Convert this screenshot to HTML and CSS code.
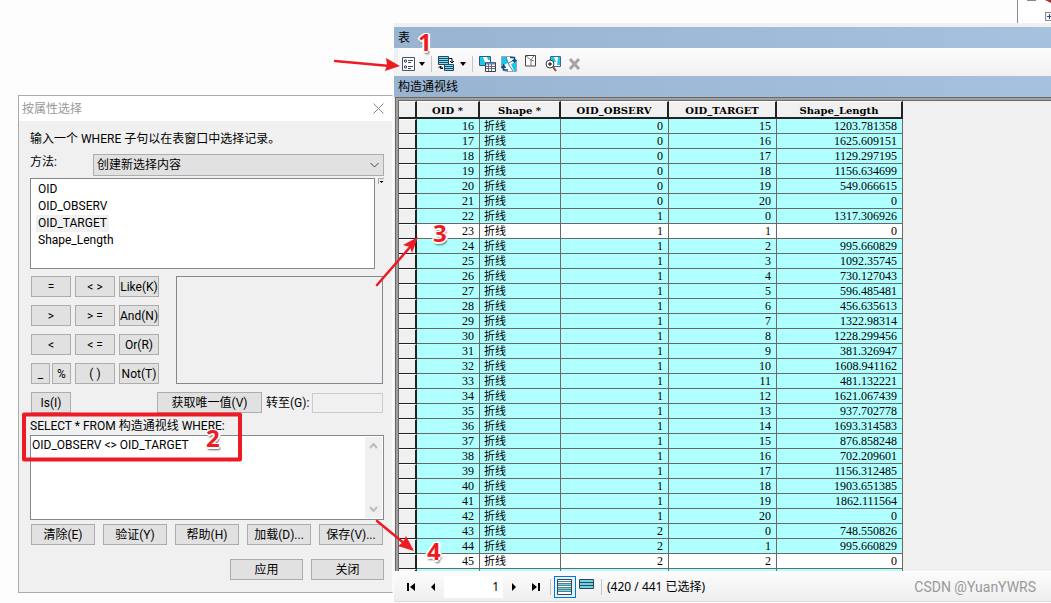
FILE: index.html
```
<!DOCTYPE html>
<html lang="zh-CN">
<head>
<meta charset="utf-8">
<title>按属性选择</title>
<link rel="stylesheet" href="styles.css">
</head>
<body>
<main class="desktop">
  <div class="tree-pane">
    <svg width="33" height="23" viewBox="0 0 33 23"><path d="M9 0h9" stroke="#888" stroke-width="2"/><path d="M27 0l6 3V0z" fill="#b03030"/><rect x="27.500" y="12.500" width="8" height="8" fill="#f4f4f4" stroke="#888"/><path d="M29 16.500h5M31.500 14v5" stroke="#2a4a9a"/></svg>
  </div>

  <section class="table-window">
    <header class="bar">表</header>
    <div class="toolbar">
      <button class="tool" aria-label="表选项"><svg width="14" height="14" viewBox="0 0 14 14"><path d="M.5.5h12v13H.5z" fill="#fff" stroke="#456"/><circle cx="3.500" cy="4" r="1.200" fill="none" stroke="#234"/><circle cx="3.500" cy="10" r="1.200" fill="none" stroke="#234"/><path d="M6 3.500h5M6 5.500h3M6 9.500h5M6 11.500h3" stroke="#447"/></svg></button>
      <button class="tool arrow" aria-label="表选项菜单"><svg width="6" height="4" viewBox="0 0 6 4"><path d="M0 0h6L3 4z"/></svg></button>
      <i class="divider"></i>
      <button class="tool" aria-label="关联表"><svg width="17" height="16" viewBox="0 0 17 16"><path d="M.5.500h10v8H.5zM6.500 8.500h9v6h-9z" fill="#7ce0ee" stroke="#246"/><path d="M1 2.500h9M1 4.500h9M1 6.500h9M7 10.500h8M7 12.500h8" stroke="#246"/><path d="M11 2.500h3V6M12 5l2 2 2-2M5 12.500H2.500V10M.5 12l2-2 2 2" fill="none" stroke="#000"/></svg></button>
      <button class="tool arrow" aria-label="关联表菜单"><svg width="6" height="4" viewBox="0 0 6 4"><path d="M0 0h6L3 4z"/></svg></button>
      <i class="divider"></i>
      <button class="tool" aria-label="按属性选择"><svg width="17" height="16" viewBox="0 0 17 16"><path d="M.5.5h11v9H.5z" fill="#fff" stroke="#357"/><path d="M1 1h3l3 8H1zM8 1h3v3H9z" fill="#18c8ea"/><path d="M6.500 6.500h10v9h-10z" fill="#fff" stroke="#345"/><path d="M7 7.500h9" stroke="#68b" stroke-width="2"/><path d="M7 10.500h9M7 12.500h9M9.500 8v7M12.500 8v7" stroke="#667"/></svg></button>
      <button class="tool" aria-label="切换选择"><svg width="16" height="16" viewBox="0 0 16 16"><path d="M.5.5h11l4 4v11h-11l-4-4z" fill="#fff" stroke="#8ab"/><path d="M1 1h4l2 6-4 2H1zM10 8l5-2v9h-2z" fill="#18c8ea"/><path d="M5 1l3 8 4 6M8 7l6-4" fill="none" stroke="#579"/><path d="M9 1.500h4.500V5M11.500 4l2 2 2-2M7 14H2.500v-4M.5 12l2-3 2 3" fill="none" stroke="#124a88" stroke-width="1.500"/></svg></button>
      <button class="tool" aria-label="清除所选内容"><svg class="raised" width="12" height="12" viewBox="0 0 12 12"><path d="M.5.500h10v10.500H.5z" fill="#fff" stroke="#444"/><path d="M1 1l5 4 3-4M6 5v6M6 5l3 1" fill="none" stroke="#777"/></svg></button>
      <button class="tool" aria-label="缩放至所选项"><svg width="16" height="16" viewBox="0 0 16 16"><path d="M5.500.5h10v10h-10z" fill="#fff" stroke="#468"/><path d="M6 1h3l2 5H6zM13 1h2v8h-3z" fill="#18c8ea"/><circle cx="5" cy="8" r="4" fill="#fff" stroke="#334"/><path d="M3 8h4M5 6v4" stroke="#000"/><path d="M8 11l3 4" stroke="#944a38" stroke-width="2"/></svg></button>
      <button class="tool" aria-label="删除所选项"><svg width="14" height="12" viewBox="0 0 14 12"><path d="M2 1l9 10M11 1L2 11" stroke="#a4a4a4" stroke-width="3"/></svg></button>
    </div>
    <div class="bar">构造通视线</div>
    <div class="grid-frame">
      <div class="grid-view">
        <table class="grid">
          <colgroup><col class="c-mark"><col class="c-oid"><col class="c-shape"><col class="c-id"><col class="c-id"><col class="c-length"></colgroup>
          <thead><tr><th></th><th>OID *</th><th>Shape *</th><th>OID_OBSERV</th><th>OID_TARGET</th><th>Shape_Length</th></tr></thead>
          <tbody>
            <tr><th></th><td>16</td><td>折线</td><td>0</td><td>15</td><td>1203.781358</td></tr>
            <tr><th></th><td>17</td><td>折线</td><td>0</td><td>16</td><td>1625.609151</td></tr>
            <tr><th></th><td>18</td><td>折线</td><td>0</td><td>17</td><td>1129.297195</td></tr>
            <tr><th></th><td>19</td><td>折线</td><td>0</td><td>18</td><td>1156.634699</td></tr>
            <tr><th></th><td>20</td><td>折线</td><td>0</td><td>19</td><td>549.066615</td></tr>
            <tr><th></th><td>21</td><td>折线</td><td>0</td><td>20</td><td>0</td></tr>
            <tr><th></th><td>22</td><td>折线</td><td>1</td><td>0</td><td>1317.306926</td></tr>
            <tr class="plain"><th></th><td>23</td><td>折线</td><td>1</td><td>1</td><td>0</td></tr>
            <tr><th></th><td>24</td><td>折线</td><td>1</td><td>2</td><td>995.660829</td></tr>
            <tr><th></th><td>25</td><td>折线</td><td>1</td><td>3</td><td>1092.35745</td></tr>
            <tr><th></th><td>26</td><td>折线</td><td>1</td><td>4</td><td>730.127043</td></tr>
            <tr><th></th><td>27</td><td>折线</td><td>1</td><td>5</td><td>596.485481</td></tr>
            <tr><th></th><td>28</td><td>折线</td><td>1</td><td>6</td><td>456.635613</td></tr>
            <tr><th></th><td>29</td><td>折线</td><td>1</td><td>7</td><td>1322.98314</td></tr>
            <tr><th></th><td>30</td><td>折线</td><td>1</td><td>8</td><td>1228.299456</td></tr>
            <tr><th></th><td>31</td><td>折线</td><td>1</td><td>9</td><td>381.326947</td></tr>
            <tr><th></th><td>32</td><td>折线</td><td>1</td><td>10</td><td>1608.941162</td></tr>
            <tr><th></th><td>33</td><td>折线</td><td>1</td><td>11</td><td>481.132221</td></tr>
            <tr><th></th><td>34</td><td>折线</td><td>1</td><td>12</td><td>1621.067439</td></tr>
            <tr><th></th><td>35</td><td>折线</td><td>1</td><td>13</td><td>937.702778</td></tr>
            <tr><th></th><td>36</td><td>折线</td><td>1</td><td>14</td><td>1693.314583</td></tr>
            <tr><th></th><td>37</td><td>折线</td><td>1</td><td>15</td><td>876.858248</td></tr>
            <tr><th></th><td>38</td><td>折线</td><td>1</td><td>16</td><td>702.209601</td></tr>
            <tr><th></th><td>39</td><td>折线</td><td>1</td><td>17</td><td>1156.312485</td></tr>
            <tr><th></th><td>40</td><td>折线</td><td>1</td><td>18</td><td>1903.651385</td></tr>
            <tr><th></th><td>41</td><td>折线</td><td>1</td><td>19</td><td>1862.111564</td></tr>
            <tr><th></th><td>42</td><td>折线</td><td>1</td><td>20</td><td>0</td></tr>
            <tr><th></th><td>43</td><td>折线</td><td>2</td><td>0</td><td>748.550826</td></tr>
            <tr><th></th><td>44</td><td>折线</td><td>2</td><td>1</td><td>995.660829</td></tr>
            <tr class="plain"><th></th><td>45</td><td>折线</td><td>2</td><td>2</td><td>0</td></tr>
            <tr><th></th><td></td><td></td><td></td><td></td><td></td></tr>
          </tbody>
        </table>
      </div>
    </div>
    <footer class="navbar">
      <button class="tool nav" aria-label="第一条"><svg width="8" height="8" viewBox="0 0 8 8"><path d="M0 0h2v8H0zM8 0v8L3 4z"/></svg></button>
      <button class="tool nav" aria-label="上一条"><svg width="8" height="8" viewBox="0 0 8 8"><path d="M6 0v8L2 4z"/></svg></button>
      <input class="record" value="1" aria-label="当前记录">
      <button class="tool nav" aria-label="下一条"><svg width="8" height="8" viewBox="0 0 8 8"><path d="M2 0v8l4-4z"/></svg></button>
      <button class="tool nav" aria-label="最后一条"><svg width="8" height="8" viewBox="0 0 8 8"><path d="M6 0h2v8H6zM0 0v8l5-4z"/></svg></button>
      <i class="divider"></i>
      <button class="tool view active" aria-label="显示所有记录"><svg width="16" height="16" viewBox="0 0 16 16"><path d="M.5.5h14v15H.5z" fill="#fff" stroke="#345"/><path d="M1 5h13v2H1zM1 9h13v3H1z" fill="#6cd4e6"/><path d="M1 2.500h13M1 4.500h13M1 6.500h13M1 8.500h13M1 10.500h13M1 12.500h13" stroke="#57808c"/></svg></button>
      <button class="tool view" aria-label="显示所选记录"><svg class="raised" width="16" height="10" viewBox="0 0 16 10"><path d="M.5.5h14v9H.5z" fill="#6cd4e6" stroke="#345"/><path d="M1 3.500h13M1 6.500h13" stroke="#345"/></svg></button>
      <i class="divider"></i>
      <span class="count">(420 / 441 已选择)</span>
      <span class="credit">CSDN @YuanYWRS</span>
    </footer>
  </section>

  <section class="dialog">
    <header class="dialog-title">按属性选择
      <button class="close" aria-label="关闭窗口"><svg width="11" height="11" viewBox="0 0 11 11"><path d="M.5.5l10 10M10.500.5l-10 10" stroke="#888"/></svg></button>
    </header>
    <form class="dialog-body">
      <p class="hint">输入一个 WHERE 子句以在表窗口中选择记录。</p>
      <div class="method">
        <label for="method">方法:</label>
        <span class="select-wrap"><select id="method"><option>创建新选择内容</option></select><svg width="9" height="6" viewBox="0 0 9 6"><path d="M.5 1l4 4 4-4" fill="none" stroke="#444"/></svg></span>
      </div>
      <div class="fields">
        <ul class="field-list"><li>OID</li><li>OID_OBSERV</li><li class="current">OID_TARGET</li><li>Shape_Length</li></ul>
        <button type="button" class="field-menu" aria-label="字段选项"><svg width="6" height="6" viewBox="0 0 6 6"><path d="M0 .5h6M.5 0v6" stroke="#aaa"/><path d="M1.500 3h4L3.500 5z"/></svg></button>
      </div>
      <div class="builder">
        <div class="keys">
          <button type="button">=</button><button type="button">&lt; &gt;</button><button type="button">Like(K)</button>
          <button type="button">&gt;</button><button type="button">&gt; =</button><button type="button">And(N)</button>
          <button type="button">&lt;</button><button type="button">&lt; =</button><button type="button">Or(R)</button>
          <div class="pair"><button type="button">_</button><button type="button">%</button></div><button type="button">( )</button><button type="button">Not(T)</button>
        </div>
        <div class="values"></div>
      </div>
      <div class="unique">
        <button type="button" class="is">Is(I)</button>
        <button type="button" class="get">获取唯一值(V)</button>
        <label for="goto">转至(G):</label>
        <input id="goto" disabled>
      </div>
      <label class="sql-label" for="sql">SELECT * FROM 构造通视线 WHERE:</label>
      <div class="sql">
        <textarea id="sql" spellcheck="false">OID_OBSERV &lt;&gt; OID_TARGET</textarea>
        <div class="scroll"><svg width="9" height="6" viewBox="0 0 9 6"><path d="M1 5l3.500-4L8 5" fill="none" stroke="#bcbcbc" stroke-width="2"/></svg><svg width="9" height="6" viewBox="0 0 9 6"><path d="M1 1l3.500 4L8 1" fill="none" stroke="#bcbcbc" stroke-width="2"/></svg></div>
      </div>
      <div class="actions">
        <button type="button">清除(E)</button><button type="button">验证(Y)</button><button type="button">帮助(H)</button><button type="button">加载(D)...</button><button type="button">保存(V)...</button>
      </div>
      <div class="confirm"><button type="button">应用</button><button type="button">关闭</button></div>
    </form>
  </section>

  <svg class="marks" width="500" height="603" viewBox="0 0 500 603">
    <g fill="none" stroke="#ed1c24" stroke-linecap="round">
      <rect x="24" y="414.500" width="216" height="45" stroke-width="4" stroke-linejoin="round"/>
      <path d="M335 61l55 5M377 285l34-39M377 521l28 23" stroke-width="2.500"/>
    </g>
    <path d="M400 66l-15 5 2-6-1-7zM418 237l-6 16-2-6-7-2zM414 551l-16-5 5-4 3-6z" fill="#ed1c24"/>
  </svg>
  <b class="mark one">1</b><b class="mark two">2</b><b class="mark three">3</b><b class="mark four">4</b>
</main>
</body>
</html>
```
FILE: styles.css
```
* { box-sizing: border-box; }
body {
  margin: 0;
  background: #fdfdfd;
  color: #000;
  font: 12px/16px Roboto, "Noto Sans CJK SC", sans-serif;
}
button, input, select, textarea { font: inherit; color: inherit; margin: 0; border-radius: 0; }
svg { display: block; }
.desktop { position: relative; min-height: 100vh; overflow: hidden; }
.tree-pane {
  position: absolute; top: 0; right: 0;
  overflow: hidden;
  background: #fff;
  border-left: 1px solid #8a8a96;
}

/* attribute table window */
.table-window {
  position: absolute; top: 23px; left: 394px; right: 0; bottom: 1px;
  display: flex; flex-direction: column;
  padding-top: 4px;
  background: #f0f0f0;
  border-bottom: 1px solid #dcdcdc;
}
.bar {
  height: 21px;
  padding: 0 4px;
  line-height: 23px;
  background: linear-gradient(90deg, #99b4d1, #a6c1de);
}
.toolbar {
  display: flex; align-items: center;
  height: 28px;
  margin: 0 0 0 4px;
  padding: 3px 4px 0;
  background: linear-gradient(#fdfdfd, #f0f0f0);
}
.tool {
  display: flex; align-items: center; justify-content: center;
  width: 22px; height: 22px;
  padding: 0; border: 0;
  background: none;
}
.toolbar .tool:first-child { width: 14px; }
.toolbar .arrow { width: 12px; }
.raised { margin-bottom: 5px; }
.divider { width: 1px; height: 16px; margin: 0 3px; background: #c4c4c4; }
.grid-frame {
  flex: 1; min-height: 0;
  display: flex;
  margin-left: 1px;
  border: 4px double #696969;
  border-right: 0; border-bottom: 0;
  background: #a0a0a0;
}
.grid-view { flex: 1; overflow: hidden; background: #f0f0f0; }
.grid { width: 504px; table-layout: fixed; border-collapse: separate; border-spacing: 0; }
.c-mark { width: 18px; }
.c-oid { width: 63px; }
.c-shape { width: 81px; }
.c-id { width: 108px; }
.c-length { width: 126px; }
.grid th {
  height: 15px;
  padding: 0;
  background: #f0f0f0;
  border-top: 1px solid #fff;
  border-right: 2px solid #222;
  border-bottom: 1px solid #222;
  font: bold 10px/13px "DejaVu Serif", serif;
}
.grid thead th { height: 18px; padding-top: 2px; border-bottom-width: 2px; }
.grid td {
  height: 15px;
  padding: 0 5px 0 4px;
  background: #afffff;
  border-right: 1px solid #696969;
  border-bottom: 1px solid #696969;
  font: 12px/14px "Liberation Serif", "Noto Sans CJK SC", serif;
  text-align: right;
}
.grid td:nth-child(3) { font-size: 11px; text-align: left; }
.grid .plain td { background: #fff; }
.navbar {
  display: flex; align-items: center;
  height: 30px;
  padding: 0 15px 0 6px;
  border-top: 1px solid #fff;
  background: linear-gradient(#fcfcfc, #eee);
  font-family: "Noto Sans", "Noto Sans CJK SC", sans-serif;
}
.record { width: 59px; height: 22px; padding: 0 4px; border: 0; background: #fff; text-align: right; }
.view { border: 1px solid transparent; }
.view.active { border-color: #0078d7; background: #e4f0fa; }
.count { margin-left: 2px; }
.credit { margin-left: auto; color: #999; font: 14px/16px Roboto, sans-serif; }

/* query dialog */
.dialog {
  position: absolute; top: 95px; left: 18px;
  width: 375px;
  background: #f0f0f0;
  border: 1px solid #aaa;
  border-right-color: #f8f8f8;
}
.dialog-title {
  display: flex; align-items: center; justify-content: space-between;
  height: 25px;
  padding: 0 8px 0 3px;
  background: #fff;
  color: #999;
}
.close { padding: 0; border: 0; background: none; }
.dialog-body { padding: 10px 8px 12px 11px; }
.dialog-body button {
  height: 21px;
  padding: 0;
  border: 1px solid #adadad;
  background: #e1e1e1;
  line-height: 18px;
  white-space: nowrap;
}
.hint { margin: 0 0 7px; }
.method { display: flex; justify-content: space-between; }
.select-wrap { position: relative; width: 291px; height: 22px; }
.select-wrap select {
  width: 100%; height: 22px;
  padding: 0 3px;
  appearance: none;
  border: 1px solid #adadad;
  background: #e1e1e1;
}
.select-wrap svg { position: absolute; top: 8px; right: 5px; }
.fields { display: flex; gap: 3px; margin-top: 2px; }
.field-list {
  width: 345px; height: 91px;
  margin: 0; padding: 2px 5px;
  border: 1px solid #828790;
  background: #fff;
  list-style: none;
}
.field-list li { width: max-content; padding: 0 2px; line-height: 17px; }
.field-list .current { background: #f0f0f0; }
.dialog-body .field-menu { height: 6px; border: 0; background: none; }
.builder { display: flex; gap: 17px; margin: 7px 1px 0; }
.keys { display: grid; grid-template-columns: repeat(3, 40px); gap: 8px 4px; }
.pair { display: flex; gap: 2px; }
.pair button { flex: 1; }
.values { flex: 1; border: 1px solid #828790; }
.unique { display: flex; align-items: center; margin: 8px 1px 0; }
.is { width: 40px; }
.get { width: 105px; margin: 0 4px 0 86px; }
.unique input { width: 71px; height: 20px; margin-left: auto; border: 1px solid #ccc; background: #f0f0f0; }
.sql-label { display: block; margin-top: 5px; }
.sql { display: flex; height: 85px; margin-top: 1px; padding: 1px; border: 1px solid #828790; background: #fff; }
.sql textarea { flex: 1; padding: 0; border: 0; resize: none; outline: 0; background: none; overflow: hidden; }
.scroll {
  display: flex; flex-direction: column; justify-content: space-between; align-items: center;
  width: 17px; padding: 6px 0;
  background: #f0f0f0;
}
.actions { display: flex; justify-content: space-between; margin: 4px 1px 0; }
.actions button { width: 64px; }
.confirm { display: flex; justify-content: flex-end; gap: 8px; margin-top: 14px; }
.confirm button { width: 73px; }

/* numbered callouts */
.marks { position: absolute; top: 0; left: 0; pointer-events: none; }
.mark {
  position: absolute;
  color: #ed1c24;
  font: bold 24px/24px "Open Sans", sans-serif;
  text-shadow: -1px -1px #fff, 1px -1px #fff, -2px 0 #fff, 2px 0 #fff, 0 2px #fff, 1px 3px 2px #666;
}
.one { top: 30px; left: 418px; }
.two { top: 426px; left: 206px; }
.three { top: 221px; left: 433px; }
.four { top: 539px; left: 427px; }
```
